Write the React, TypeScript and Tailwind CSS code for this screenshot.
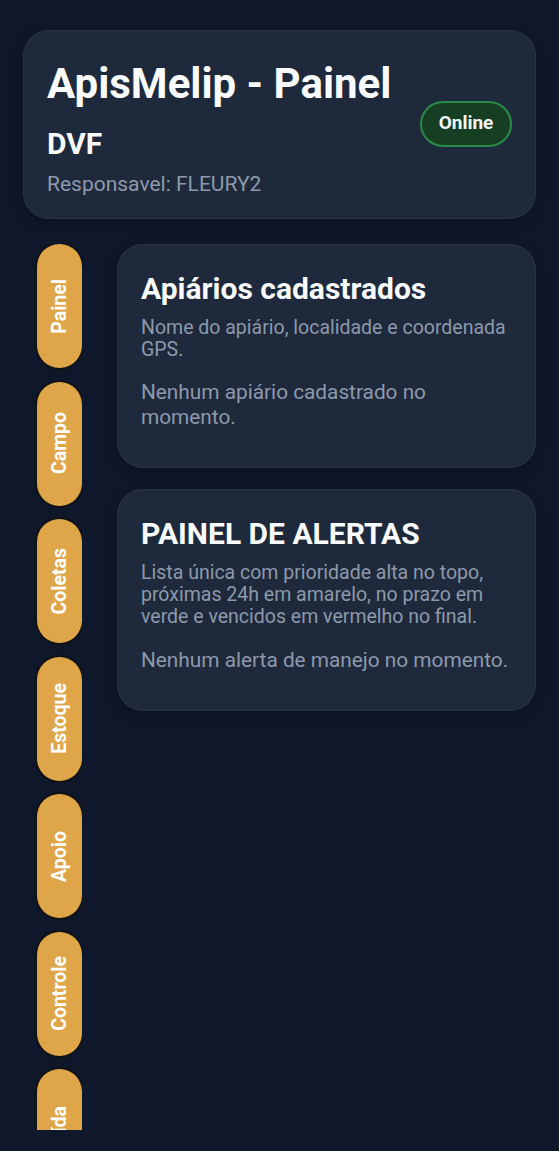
import React from "react";

const tabs = ["Painel", "Campo", "Coletas", "Estoque", "Apoio", "Controle", "Saída"];

export default function App() {
  return (
    <div
      className="min-h-[1151px] w-full bg-[#0f172a] px-[23px] pt-[30px] pb-[22px]"
      style={{ fontFamily: "Roboto, 'Noto Sans', sans-serif" }}
    >
      <div className="flex items-center justify-between rounded-[26px] border border-white/5 bg-[#1e293b] pl-[23px] pr-[23px] pt-[29px] pb-[22px] shadow-[0_4px_12px_rgba(0,0,0,0.25)]">
        <div className="flex flex-col">
          <div className="text-[42px] font-bold leading-[48px] text-[#f8fafc]">ApisMelip - Painel</div>
          <div className="mt-[18px] text-[30px] font-bold leading-[36px] text-[#f8fafc]">DVF</div>
          <div className="mt-[10px] text-[21px] leading-[24px] text-[#8d99ab]">Responsavel: FLEURY2</div>
        </div>
        <div className="mb-[9px] flex h-[46px] w-[92px] shrink-0 items-center justify-center rounded-full border-2 border-[#2a8a48] bg-[#153e22] text-[19px] font-bold text-[#f1f5f9]">
          Online
        </div>
      </div>

      <div className="mt-[25px] flex gap-[35px]">
        <div className="flex h-[886px] w-[59px] shrink-0 flex-col gap-[13.5px] overflow-hidden pl-[14px]">
          {tabs.map((t) => (
            <div
              key={t}
              className="flex h-[124px] w-[45px] shrink-0 items-center justify-center rounded-full bg-[#dea649] shadow-[0_0_0_2px_rgba(20,14,6,0.55)]"
            >
              <span className="rotate-180 text-[19.5px] font-bold leading-none text-white [writing-mode:vertical-rl]">{t}</span>
            </div>
          ))}
        </div>

        <div className="flex min-w-0 flex-1 flex-col gap-[21px]">
          <div className="rounded-[26px] border border-white/5 bg-[#1e293b] px-[23px] pt-[26px] pb-[37px] shadow-[0_4px_12px_rgba(0,0,0,0.25)]">
            <div className="text-[30px] font-bold leading-[36px] text-[#f8fafc]">Apiários cadastrados</div>
            <div className="mt-[10px] text-[19.5px] leading-[22px] text-[#8d99ab]">
              Nome do apiário, localidade e coordenada GPS.
            </div>
            <div className="mt-[19px] text-[20.8px] leading-[25px] text-[#8d99ab]">
              Nenhum apiário cadastrado no momento.
            </div>
          </div>

          <div className="rounded-[26px] border border-white/5 bg-[#1e293b] px-[23px] pt-[26px] pb-[37px] shadow-[0_4px_12px_rgba(0,0,0,0.25)]">
            <div className="text-[30px] font-bold leading-[36px] text-[#f8fafc]">PAINEL DE ALERTAS</div>
            <div className="mt-[10px] text-[19.5px] leading-[22px] text-[#8d99ab]">
              Lista única com prioridade alta no topo, próximas 24h em amarelo, no prazo em verde e vencidos em vermelho no final.
            </div>
            <div className="mt-[20px] text-[20.8px] leading-[25px] text-[#8d99ab]">
              Nenhum alerta de manejo no momento.
            </div>
          </div>
        </div>
      </div>
    </div>
  );
}
